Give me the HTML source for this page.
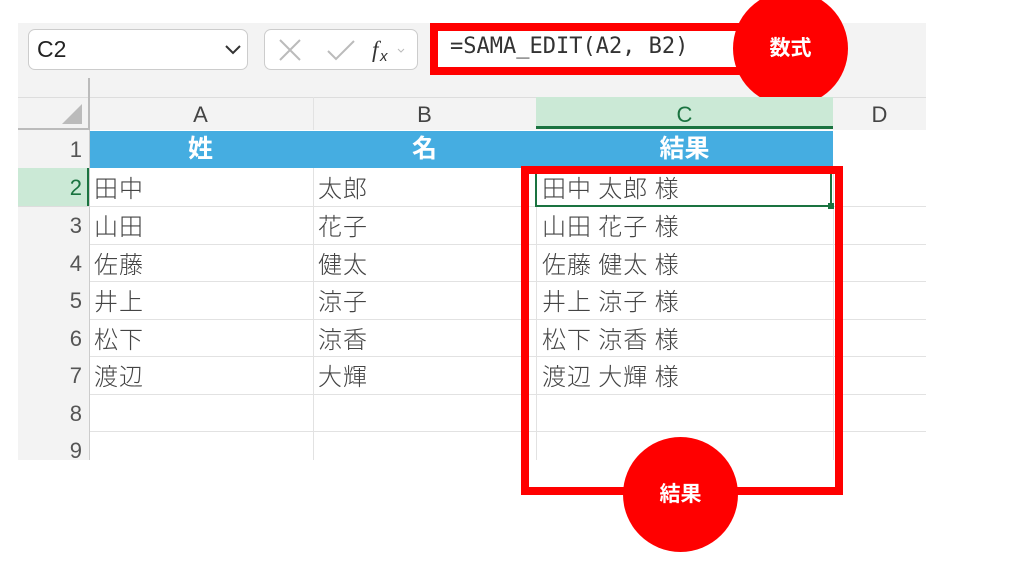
<!DOCTYPE html>
<html><head><meta charset="utf-8"><style>
*{margin:0;padding:0;box-sizing:border-box}
body{width:1024px;height:562px;background:#fff;position:relative;overflow:hidden;font-family:"Liberation Sans","Noto Sans CJK JP",sans-serif}
.a{position:absolute}
.cell{position:absolute;font-size:24px;color:#444;line-height:37px;white-space:nowrap;font-weight:300;letter-spacing:1px;font-family:"Noto Sans CJK JP",sans-serif}
.hl{position:absolute;height:1px;background:#e2e2e2}
.vl{position:absolute;width:1px;background:#e2e2e2}
.rn{position:absolute;left:18px;width:64px;text-align:right;font-size:22px;color:#555;line-height:37px}
</style></head><body>
<div class="a" style="left:18px;top:23px;width:908px;height:437px;background:#f3f3f3"></div>
<div class="a" style="left:28px;top:29px;width:220px;height:41px;background:#fff;border:1px solid #ccc;border-radius:7px"></div>
<div class="a" style="left:37px;top:36px;font-size:23px;color:#222">C2</div>
<svg class="a" style="left:224px;top:44px" width="18" height="12"><path d="M2 2 L9 9 L16 2" stroke="#333" stroke-width="2" fill="none"/></svg>
<div class="a" style="left:264px;top:29px;width:154px;height:41px;background:#fff;border:1px solid #ccc;border-radius:7px"></div>
<svg class="a" style="left:278px;top:37px" width="130" height="26"><path d="M2 3 L22 23 M22 3 L2 23" stroke="#bbb" stroke-width="2"/><path d="M50 14 L58 22 L76 4" stroke="#bbb" stroke-width="2" fill="none"/><text x="94" y="20" font-size="23" font-style="italic" font-family="Liberation Serif" fill="#333">f</text><text x="102" y="24" font-size="15" font-style="italic" fill="#333">x</text><path d="M120 12 L123 15 L126 12" stroke="#bbb" fill="none"/></svg>
<div class="a" style="left:434px;top:27px;width:320px;height:44px;background:#fff"></div>
<div class="a" style="left:430px;top:23px;width:330px;height:52px;border:8px solid #f00"></div>
<div class="a" style="left:450px;top:34px;font-family:'DejaVu Sans Mono',monospace;font-size:22px;color:#333">=SAMA_EDIT(A2, B2)</div>
<div class="a" style="left:733px;top:-9px;width:115px;height:115px;border-radius:50%;background:#f00;color:#fff;font-weight:bold;font-size:21px;text-align:center;line-height:115px">数式</div>
<div class="a" style="left:18px;top:97px;width:908px;height:1px;background:#ddd"></div>
<div class="a" style="left:88px;top:78px;width:2px;height:52px;background:#bbb"></div>
<svg class="a" style="left:60px;top:102px" width="24" height="24"><path d="M22 2 L22 22 L2 22 Z" fill="#bbb"/></svg>
<div class="a" style="left:18px;top:128px;width:72px;height:2px;background:#bbb"></div>
<div class="a" style="left:88px;top:97px;width:225px;text-align:center;font-size:22px;color:#444;line-height:35px">A</div>
<div class="a" style="left:313px;top:97px;width:223px;text-align:center;font-size:22px;color:#444;line-height:35px">B</div>
<div class="a" style="left:536px;top:97px;width:297px;height:32px;background:#cbe9d6;border-bottom:3px solid #1a7340;text-align:center;font-size:22px;color:#1a7340;line-height:35px">C</div>
<div class="a" style="left:833px;top:97px;width:93px;text-align:center;font-size:22px;color:#444;line-height:35px">D</div>
<div class="vl" style="left:313px;top:97px;height:33px"></div>
<div class="a" style="left:90px;top:130px;width:836px;height:330px;background:#fff"></div>
<div class="a" style="left:90px;top:131px;width:743px;height:37px;background:#45ade1"></div>
<div class="a" style="left:88px;top:131px;width:225px;text-align:center;color:#fff;font-size:25px;font-weight:bold;line-height:37px">姓</div>
<div class="a" style="left:313px;top:131px;width:223px;text-align:center;color:#fff;font-size:25px;font-weight:bold;line-height:37px">名</div>
<div class="a" style="left:536px;top:131px;width:297px;text-align:center;color:#fff;font-size:25px;font-weight:bold;line-height:37px">結果</div>
<div class="a" style="left:18px;top:168px;width:70px;height:38px;background:#cbe9d6"></div>
<div class="a" style="left:87px;top:168px;width:3px;height:38px;background:#1a7340"></div>
<div class="vl" style="left:89px;top:130px;height:330px;background:#ccc"></div>
<div class="vl" style="left:313px;top:168px;height:292px"></div>
<div class="vl" style="left:536px;top:168px;height:292px"></div>
<div class="vl" style="left:833px;top:168px;height:292px"></div>
<div class="hl" style="left:90px;top:206px;width:836px"></div>
<div class="hl" style="left:90px;top:244px;width:836px"></div>
<div class="hl" style="left:90px;top:281px;width:836px"></div>
<div class="hl" style="left:90px;top:319px;width:836px"></div>
<div class="hl" style="left:90px;top:356px;width:836px"></div>
<div class="hl" style="left:90px;top:394px;width:836px"></div>
<div class="hl" style="left:90px;top:431px;width:836px"></div>
<div class="hl" style="left:18px;top:206px;width:72px;background:#ddd"></div>
<div class="rn" style="top:131px">1</div>
<div class="rn" style="top:169px;color:#1a7340">2</div>
<div class="rn" style="top:207px">3</div>
<div class="rn" style="top:245px">4</div>
<div class="rn" style="top:282px">5</div>
<div class="rn" style="top:320px">6</div>
<div class="rn" style="top:357px">7</div>
<div class="rn" style="top:395px">8</div>
<div class="rn" style="top:432px">9</div>
<div class="cell" style="left:94px;top:168px">田中</div><div class="cell" style="left:318px;top:168px">太郎</div><div class="cell" style="left:542px;top:168px">田中 太郎 様</div>
<div class="cell" style="left:94px;top:206px">山田</div><div class="cell" style="left:318px;top:206px">花子</div><div class="cell" style="left:542px;top:206px">山田 花子 様</div>
<div class="cell" style="left:94px;top:244px">佐藤</div><div class="cell" style="left:318px;top:244px">健太</div><div class="cell" style="left:542px;top:244px">佐藤 健太 様</div>
<div class="cell" style="left:94px;top:281px">井上</div><div class="cell" style="left:318px;top:281px">涼子</div><div class="cell" style="left:542px;top:281px">井上 涼子 様</div>
<div class="cell" style="left:94px;top:319px">松下</div><div class="cell" style="left:318px;top:319px">涼香</div><div class="cell" style="left:542px;top:319px">松下 涼香 様</div>
<div class="cell" style="left:94px;top:356px">渡辺</div><div class="cell" style="left:318px;top:356px">大輝</div><div class="cell" style="left:542px;top:356px">渡辺 大輝 様</div>
<div class="a" style="left:535px;top:168px;width:297px;height:39px;border:2px solid #1a7340"></div>
<div class="a" style="left:828px;top:203px;width:6px;height:6px;background:#1a7340"></div>
<div class="a" style="left:521px;top:166px;width:322px;height:329px;border:8px solid #f00"></div>
<div class="a" style="left:623px;top:437px;width:115px;height:115px;border-radius:50%;background:#f00;color:#fff;font-weight:bold;font-size:21px;text-align:center;line-height:115px">結果</div>
</body></html>
